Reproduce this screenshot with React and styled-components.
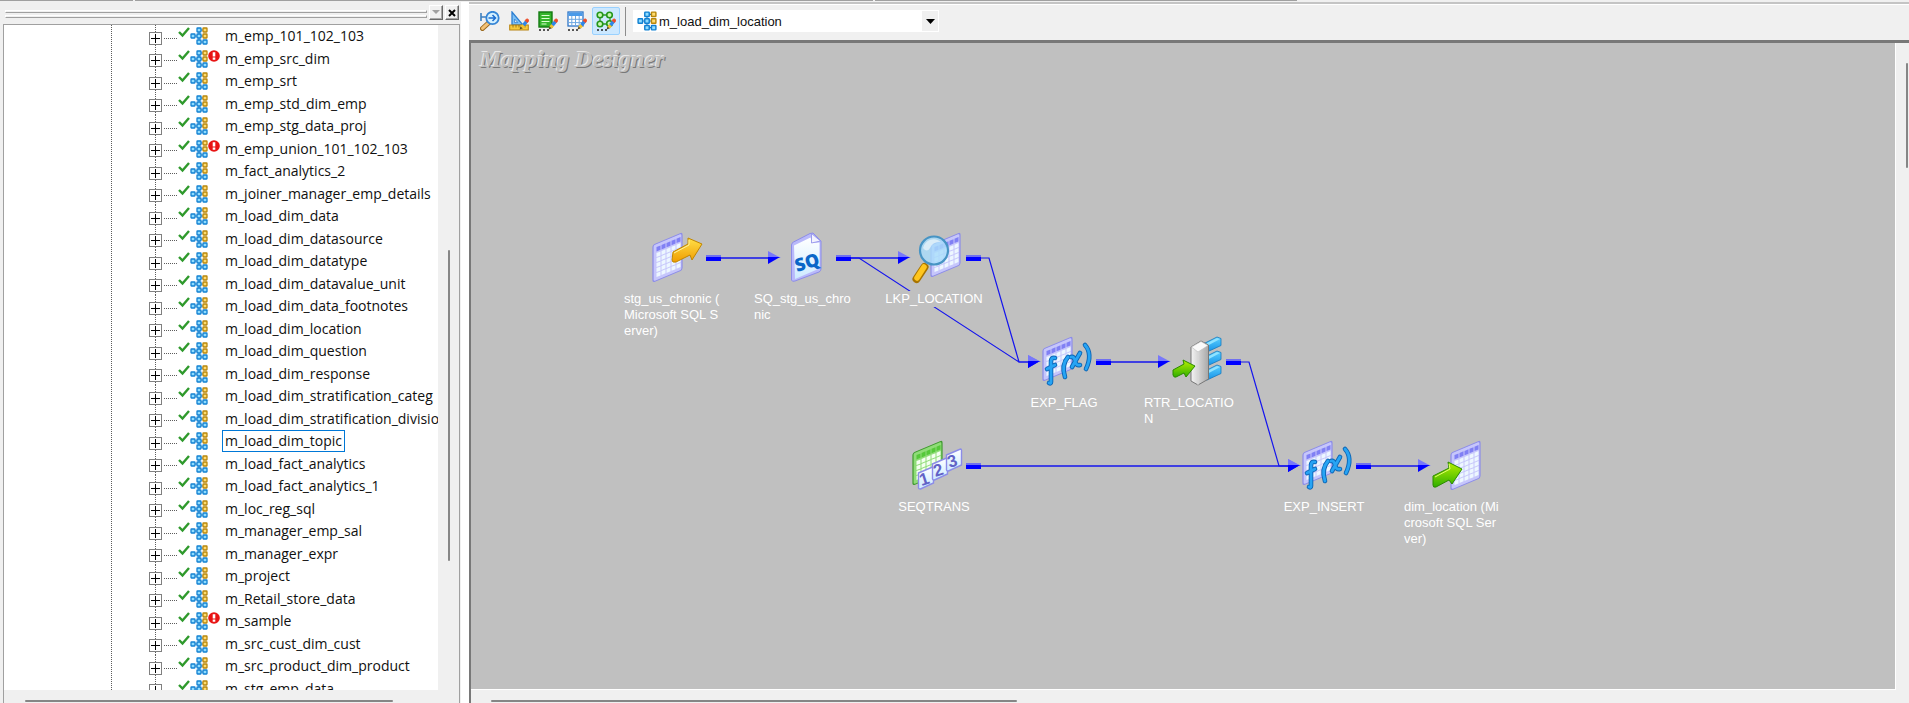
import React from 'react';
import styled, { createGlobalStyle, css } from 'styled-components';

const GlobalStyle = createGlobalStyle`
  *, *::before, *::after { box-sizing: border-box; }
  html, body { margin: 0; height: 100%; }
  #root { height: 100%; }
  body {
    background: #f0f0f0;
    color: #101010;
    font-family: "Open Sans", "Noto Sans", sans-serif;
    font-size: 14px;
    overflow: hidden;
  }
  button { font: inherit; padding: 0; }
`;

/* ---------- window frame ---------- */

const Window = styled.div`
  display: flex;
  flex-direction: column;
  height: 100vh;
  overflow: hidden;
`;

const FrameEdge = styled.div`
  display: flex;
  flex: none;
  gap: 2px;
  height: 2px;
`;

const EdgeLine = styled.div`
  flex: ${(p) => p.$share} 1 0;
  height: 1px;
  background: ${(p) => (p.$blank ? 'transparent' : '#a0a0a0')};
`;

const Workspace = styled.div`
  display: flex;
  flex: 1;
  min-height: 0;
`;

/* ---------- scroll bars ---------- */

const Track = styled.div`
  display: flex;
  background: #f0f0f0;
  &::before { content: ""; flex: ${(p) => p.$before} 1 0; }
  &::after { content: ""; flex: ${(p) => p.$after} 1 0; }
  ${(p) =>
    p.$vertical
      ? css`
          flex-direction: column;
          width: ${p.$depth}px;
          padding-left: ${p.$inset}px;
        `
      : css`
          height: 13px;
          padding-top: 10px;
        `}
`;

const Thumb = styled.div`
  flex: ${(p) => p.$size} 1 0;
  border-radius: 1px;
  background: #868686;
  ${(p) => (p.$vertical ? 'width: 2px;' : 'height: 2px;')}
`;

function ScrollBar({ vertical, parts, depth, inset }) {
  return (
    <Track $vertical={vertical} $before={parts[0]} $after={parts[2]} $depth={depth} $inset={inset} aria-hidden="true">
      <Thumb $vertical={vertical} $size={parts[1]} />
    </Track>
  );
}

/* ---------- repository navigator ---------- */

const Navigator = styled.aside`
  display: flex;
  flex: none;
  flex-direction: column;
  width: 461px;
  padding: 0 1px 0 3px;
`;

const NavHeader = styled.header`
  display: flex;
  flex: none;
  gap: 2px;
  height: 22px;
  padding: 3px 1px 0 2px;
`;

const Grip = styled.div`
  display: grid;
  flex: 1;
  align-content: start;
  gap: 2px;
  padding-top: 5px;
`;

const GripBar = styled.div`
  height: 3px;
  border: 1px solid #a0a0a0;
  border-top-color: #fff;
  border-left-color: #fff;
`;

const CaptionButton = styled.button`
  display: grid;
  place-items: center;
  width: 14px;
  height: 15px;
  border: 1px solid #fff;
  border-right-color: #696969;
  border-bottom-color: #696969;
  background: #f0f0f0;
  box-shadow: inset -1px -1px #a8a8a8;
`;

const TreeFrame = styled.div`
  display: grid;
  flex: 1;
  grid-template-columns: minmax(0, 1fr) auto;
  grid-template-rows: minmax(0, 1fr);
  min-height: 0;
  border: 1px solid #a0a0a0;
  border-width: 1px 1px 0;
`;

const NavBottom = styled.div`
  flex: none;
  border-left: 1px solid #a0a0a0;
  border-right: 1px solid #a0a0a0;
`;

const vDots = 'repeating-linear-gradient(#5c5c5c 0 1px, transparent 1px 2px)';
const hDots = 'repeating-linear-gradient(90deg, #5c5c5c 0 1px, transparent 1px 2px)';

const Tree = styled.ul`
  display: grid;
  grid-auto-rows: 22px 23px;
  align-content: start;
  margin: 0;
  padding: 0 0 0 145px;
  overflow: hidden;
  background: ${vDots} 107px 0 / 1px 100% no-repeat #fff;
  list-style: none;
`;

const TreeRow = styled.li`
  display: flex;
  align-items: center;
  min-width: 0;
`;

const ExpanderCell = styled.div`
  display: flex;
  align-items: center;
  align-self: stretch;
  width: 13px;
  padding-top: 4px;
  background: ${vDots} 6px 0 / 1px 100% no-repeat;
`;

const Expander = styled.button`
  display: grid;
  place-items: center;
  width: 13px;
  height: 13px;
  border: 1px solid #808080;
  background: #fff;
`;

const Stub = styled.div`
  flex: none;
  width: 14px;
  height: 1px;
  margin: 4px 0 0 2px;
  background: ${hDots};
`;

const Check = styled.svg`
  flex: none;
  width: 12px;
  height: 12px;
  margin-bottom: 8px;
`;

const Glyph = styled.svg`
  flex: none;
  width: ${(p) => p.$size}px;
  height: ${(p) => p.$size}px;
`;

const BadgeSlot = styled.div`
  display: flex;
  flex: none;
  width: 14px;
  height: 18px;
`;

const ItemLabel = styled.span`
  flex: none;
  padding: 0 2px;
  border: 1px solid ${(p) => (p.$selected ? '#0078d7' : 'transparent')};
  line-height: 20px;
  white-space: nowrap;
`;

/* ---------- designer ---------- */

const Designer = styled.main`
  display: flex;
  flex: 1;
  flex-direction: column;
  min-width: 0;
  border-left: 8px solid #fff;
`;

const Toolbar = styled.div`
  display: flex;
  flex: none;
  align-items: center;
  gap: 1px;
  height: 38px;
  padding: 0 7px 2px;
  border-top: 2px solid #c4c4c4;
  box-shadow: inset 0 1px #fff;
`;

const ToolButton = styled.button`
  display: grid;
  place-items: center;
  width: 28px;
  height: 28px;
  border: 1px solid ${(p) => (p.$active ? '#99d1ff' : 'transparent')};
  border-radius: 2px;
  background: ${(p) => (p.$active ? '#cce8ff' : 'transparent')};
`;

const Divider = styled.div`
  width: 1px;
  height: 29px;
  margin: 0 6px 0 4px;
  background: #8c8c8c;
`;

const Picker = styled.label`
  display: flex;
  align-items: center;
  width: 306px;
  height: 22px;
  padding: 0 1px 0 4px;
  background: #fff;
`;

const PickerSelect = styled.select`
  flex: 1;
  min-width: 0;
  height: 22px;
  padding: 0 2px;
  border: 0;
  appearance: none;
  background: transparent;
  color: #101010;
  font: 13px "Liberation Sans", sans-serif;
`;

const PickerArrow = styled.span`
  display: grid;
  place-items: center;
  width: 16px;
  height: 20px;
  background: #f0f0f0;
  pointer-events: none;
`;

const CanvasFrame = styled.div`
  display: grid;
  flex: 1;
  grid-template-columns: minmax(0, 1fr) auto;
  grid-template-rows: minmax(0, 1fr) auto;
  min-height: 0;
  border: solid #787878;
  border-width: 3px 0 0 2px;
`;

const Canvas = styled.section`
  position: relative;
  overflow: hidden;
  border: solid #fff;
  border-width: 0 1px 1px 0;
  background: #c0c0c0;
`;

const Title = styled.h1`
  margin: 0;
  padding: 2px 9px;
  color: #c0c0c0;
  font: italic bold 24px/28px "Liberation Serif", serif;
  text-shadow: -1px -1px #e8e8e8, 1px 1px #787878;
`;

const Links = styled.svg`
  position: absolute;
  inset: 0;
  width: 100%;
  height: 100%;
`;

const Node = styled.figure`
  position: absolute;
  left: ${(p) => p.$x}px;
  top: ${(p) => p.$y}px;
  display: flex;
  flex-direction: column;
  align-items: center;
  gap: 9px;
  width: 100px;
  margin: 0;
`;

const NodeIcon = styled.svg`
  width: 50px;
  height: 50px;
  margin-left: 6px;
  overflow: visible;
`;

const NodeLabel = styled.figcaption`
  align-self: ${(p) => (p.$wrapped ? 'flex-start' : 'center')};
  background: #c0c0c0;
  color: #fff;
  font: 13px/16px "Liberation Sans", sans-serif;
  white-space: pre;
`;

/* ---------- small icons ---------- */

function MappingIcon({ size = 18 }) {
  const blue = { fill: '#8fdcff', stroke: '#1180d2' };
  const gold = { fill: '#ffdc70', stroke: '#b8860b' };
  const cells = [
    [7, 1, blue], [13, 1, gold],
    [1, 7, blue], [7, 7, blue], [13, 7, gold],
    [7, 13, blue], [13, 13, blue],
  ];
  return (
    <Glyph $size={size} viewBox="0 0 18 18" aria-hidden="true">
      <path d="M3 9h12M9 3v12M9 3h6M9 15h6" stroke="#1b6fb5" strokeWidth="1" fill="none" />
      {cells.map(([x, y, c]) => (
        <rect key={`${x}-${y}`} x={x} y={y} width="4" height="4" rx="0.5" strokeWidth="1.3" {...c} />
      ))}
    </Glyph>
  );
}

const CheckIcon = () => (
  <Check viewBox="0 0 12 12" aria-hidden="true">
    <path d="M1 6l3.500 3.500L11 2" fill="none" stroke="#2f9a2c" strokeWidth="2.4" />
  </Check>
);

const ErrorBadge = () => (
  <svg width="12" height="12" viewBox="0 0 12 12" role="img" aria-label="Invalid">
    <circle cx="6" cy="6" r="5.8" fill="#e81414" />
    <path d="M6 2.2v4.200M6 7.600v2.200" stroke="#fff" strokeWidth="2.6" />
  </svg>
);

const Pencil = () => (
  <g>
    <path d="M10.600 18.400l1-3.400 2.400 2.200z" fill="#5a4a20" />
    <path d="M11.400 15.400l2-2.400 2.600 2.200-2 2.400z" fill="#f2c230" />
    <path d="M13.200 13l3-3.600 2.600 2.200-3 3.600z" fill="#2f86e8" />
    <path d="M16 9.600l1.200-1.400q1.400-.8 2.400.6.6 1-.2 1.600l-.8 1.200z" fill="#ee4a26" stroke="#ee4a26" strokeWidth=".8" />
  </g>
);

const Dots = () => <path d="M1 19h2M5 19h2M9 19h2" stroke="#222" strokeWidth="1.3" />;

const toolIcons = {
  'Source Analyzer': (
    <>
      <path d="M1 2v8M1 6h6" stroke="#3b7fc0" strokeWidth="1.6" />
      <path d="M2.5 17.5l6-5.5" stroke="#9c6a1e" strokeWidth="5" strokeLinecap="round" />
      <path d="M2.5 17.3l6-5.5" stroke="#f3c277" strokeWidth="3" strokeLinecap="round" />
      <circle cx="12.5" cy="7" r="6.2" fill="#d3f0ff" stroke="#3585d6" strokeWidth="1.8" />
      <path d="M8.5 7h7M12.5 4l3 3-3 3" fill="none" stroke="#1c6cd0" strokeWidth="1.5" />
    </>
  ),
  'Target Designer': (
    <>
      <path d="M3 1v13h11z" fill="#7cc0f5" stroke="#2d7fd2" strokeWidth="1.3" />
      <path d="M5.6 8v3.6h3.2z" fill="#f0f0f0" stroke="#2d7fd2" strokeWidth=".8" />
      <rect x=".7" y="14" width="18.6" height="5" fill="#f7ca3c" stroke="#b88412" />
      <path d="M4 14v2.5M7 14v2.5M10 14v2.5M13 14v2.5M16 14v2.5" stroke="#8a6410" strokeWidth=".8" />
      <Pencil />
    </>
  ),
  'Transformation Developer': (
    <>
      <rect x="1" y="1" width="13" height="15" fill="#35b52c" stroke="#137a12" strokeWidth="1.4" />
      <path d="M3.5 4.5h8M3.5 7.5h8M3.5 10.5h8M3.5 13h5" stroke="#dcffd2" strokeWidth="1.1" />
      <Dots />
      <Pencil />
    </>
  ),
  'Mapplet Designer': (
    <>
      <rect x="1" y="1" width="15" height="14" fill="#fff" stroke="#2f76c8" strokeWidth="1.3" />
      <rect x="1.5" y="1.5" width="14" height="3.5" fill="#4a9ae8" />
      <path d="M1 8.3h15M1 11.6h15M4.8 5v10M8.5 5v10M12.2 5v10" stroke="#6ea8e2" />
      <Dots />
      <Pencil />
    </>
  ),
  'Mapping Designer': (
    <>
      <path d="M4 4h10v9H4z" fill="none" stroke="#2b9a1e" strokeWidth="1.3" />
      {[[4, 4], [13.5, 4], [4, 13], [13.5, 12.5]].map(([x, y]) => (
        <circle key={`${x}${y}`} cx={x} cy={y} r="2.8" fill="#c9f7b4" stroke="#24951a" strokeWidth="1.6" />
      ))}
      <Dots />
      <Pencil />
    </>
  ),
};

/* ---------- transformation icons, each on a 50 x 50 field ---------- */

function Sheet({ x = 0, height = 32, green }) {
  const c = green
    ? { back: '#8fdc78', edge: '#3f9a2e', head: '#55c83a', cell: '#f4fff0' }
    : { back: '#c6c6fb', edge: '#8c8ce8', head: '#8080f4', cell: '#edf7ff' };
  const rows = Math.floor((height - 11) / 5);
  return (
    <g transform={`matrix(1 -0.42 0 1 ${x} 13)`}>
      <rect x="1" y="0.5" width="29" height={height} rx="2" fill={c.back} stroke={c.edge} strokeWidth="1.2" />
      {[0, 1, 2, 3, 4].map((i) => (
        <g key={i}>
          <rect x={4.5 + i * 5} y="4" width="4" height="4.4" fill={c.head} />
          {Array.from({ length: rows }, (_, r) => (
            <rect key={r} x={4.5 + i * 5} y={10 + r * 5} width="4" height="4" fill={c.cell} />
          ))}
        </g>
      ))}
    </g>
  );
}

const Shades = () => (
  <svg width="0" height="0" aria-hidden="true">
    <defs>
      <linearGradient id="gold" x1="0" y1="0" x2="0" y2="1">
        <stop offset="0" stopColor="#ffe14a" /><stop offset="1" stopColor="#f09c00" />
      </linearGradient>
      <linearGradient id="lime" x1="0" y1="0" x2="0" y2="1">
        <stop offset="0" stopColor="#b8f000" /><stop offset="1" stopColor="#2fae00" />
      </linearGradient>
      <linearGradient id="azure" x1="0" y1="0" x2="0" y2="1">
        <stop offset="0" stopColor="#5cd0ff" /><stop offset="1" stopColor="#1492e8" />
      </linearGradient>
      <linearGradient id="steel" x1="0" y1="0" x2="1" y2="0">
        <stop offset="0" stopColor="#f4f4f4" /><stop offset="1" stopColor="#a8a8a8" />
      </linearGradient>
      <linearGradient id="paper" x1="0" y1="0" x2="0" y2="1">
        <stop offset="0" stopColor="#ffffff" /><stop offset="1" stopColor="#cdeaff" />
      </linearGradient>
    </defs>
  </svg>
);

const artwork = {
  source: (
    <>
      <Sheet height={37} />
      <path d="M21 20l15-8V6l14 6-10 16-2-5-14 7q-4 1-4-2z" fill="url(#gold)" stroke="#c08600" strokeWidth="1" strokeLinejoin="round" />
      <path d="M22 21l15-8V8" fill="none" stroke="#fff3a0" strokeWidth="1" />
    </>
  ),
  qualifier: (
    <>
      <path d="M9.5 13q0-2 2-3L28 1.5l3-.5 8 8v28q0 2-2 3L13 49q-3 1-3.5-1z" fill="#b9b9fa" stroke="#8c8ce8" strokeWidth="1" />
      <path d="M12 13.5L28.5 5.5l2 5.5 7-.5V36.5L13 47z" fill="url(#paper)" />
      <path d="M29.5 1.5v9.5l9-2z" fill="#f2f2ff" stroke="#8c8ce8" strokeWidth=".8" />
      <text x="15" y="40" transform="rotate(-17 15 40)" fontFamily='"Open Sans", sans-serif' fontWeight="800" fontSize="18" fill="#0a66c8">SQ</text>
    </>
  ),
  lookup: (
    <>
      <Sheet x={18} height={32} />
      <path d="M12.5 35L4.5 47" stroke="#a87400" strokeWidth="8" strokeLinecap="round" />
      <path d="M12 35L5 46" stroke="#ffc61e" strokeWidth="5.5" strokeLinecap="round" />
      <circle cx="22" cy="18.5" r="14" fill="#a8dcfa" fillOpacity=".82" stroke="#4794c4" strokeWidth="2.2" />
      <path d="M11 16a11 11 0 0 1 18-6q-8-1-11 6-3 5-7 0z" fill="#fff" fillOpacity=".55" />
    </>
  ),
  expression: (
    <>
      <Sheet height={32} />
      {[['#0b64b4', 4.6], ['#27a4f4', 2.8]].map(([color, width]) => (
        <g key={color} fill="none" stroke={color} strokeWidth={width} strokeLinecap="round" strokeLinejoin="round">
          <path d="M13 22q-4-1-4 4v20q0 2-2 1M5 33l8-4" />
          <path d="M26 21q-7 8-3 20" />
          <path d="M29 21q3-1 4 4t5 4M38 17l-8 14" />
          <path d="M43 9q8 9 1 24" />
        </g>
      ))}
    </>
  ),
  router: (
    <>
      {[0, 14, 28].map((y) => (
        <g key={y} transform={`translate(0 ${y})`}>
          <path d="M31 8L45 1l4 1.500v7L35 16l-4-1z" fill="url(#azure)" stroke="#1678bc" strokeWidth=".8" />
          <path d="M32 8.500L45 2l3 1-13 7z" fill="#8fe2ff" />
        </g>
      ))}
      <path d="M19 11l10-6 7.500 4v34L26 49l-7-4z" fill="url(#steel)" stroke="#777" strokeWidth="1" />
      <path d="M19.500 11l9.500-5.500 7 4L26 16z" fill="#fafafa" stroke="#bbb" strokeWidth=".6" />
      <path d="M26 16v33" stroke="#d8d8d8" />
      <path d="M1 34l11-6-1-4 12 6-9 11-2-4-8 4q-2 1-3-2z" fill="url(#lime)" stroke="#2b8a00" strokeWidth="1" strokeLinejoin="round" />
    </>
  ),
  sequence: (
    <>
      <Sheet height={32} green />
      {[[6.5, 33, '1'], [20.5, 24, '2'], [34.5, 15, '3']].map(([x, y, n]) => (
        <g key={n}>
          <path d={`M${x} ${y}l14-6q1 0 1 1v15l-13 6q-2 0-2-1z`} fill="url(#paper)" stroke="#8c8ce8" strokeWidth="1.4" />
          <text x={x + 3} y={y + 13} transform={`rotate(-18 ${x + 3} ${y + 13})`} fontFamily='"Liberation Sans", sans-serif' fontWeight="700" fontSize="17" fill="#6262c6">{n}</text>
        </g>
      ))}
    </>
  ),
  target: (
    <>
      <Sheet x={18} height={37} />
      <path d="M1 36l16-8-1-6 14 7-10 15-3-4-13 7q-3 1-3-2z" fill="url(#lime)" stroke="#2b8a00" strokeWidth="1" strokeLinejoin="round" />
      <path d="M3 37l15-8-1-5" fill="none" stroke="#e2ff70" strokeWidth="1" />
    </>
  ),
};

/* ---------- data ---------- */

const mappings = [
  'm_emp_101_102_103', 'm_emp_src_dim', 'm_emp_srt', 'm_emp_std_dim_emp', 'm_emp_stg_data_proj',
  'm_emp_union_101_102_103', 'm_fact_analytics_2', 'm_joiner_manager_emp_details', 'm_load_dim_data',
  'm_load_dim_datasource', 'm_load_dim_datatype', 'm_load_dim_datavalue_unit', 'm_load_dim_data_footnotes',
  'm_load_dim_location', 'm_load_dim_question', 'm_load_dim_response', 'm_load_dim_stratification_categ',
  'm_load_dim_stratification_divisio', 'm_load_dim_topic', 'm_load_fact_analytics', 'm_load_fact_analytics_1',
  'm_loc_reg_sql', 'm_manager_emp_sal', 'm_manager_expr', 'm_project', 'm_Retail_store_data', 'm_sample',
  'm_src_cust_dim_cust', 'm_src_product_dim_product', 'm_stg_emp_data',
];
const invalid = new Set(['m_emp_src_dim', 'm_emp_union_101_102_103', 'm_sample']);
const selected = 'm_load_dim_topic';

/* Nodes sit on a 130 x 104 placement grid. */
const place = (col, row) => ({ x: 153 + col * 130, y: 189 + row * 104 });

const nodes = {
  source: { at: place(0, 0), art: 'source', label: 'stg_us_chronic (\nMicrosoft SQL S\nerver)' },
  sq: { at: place(1, 0), art: 'qualifier', label: 'SQ_stg_us_chro\nnic' },
  lkp: { at: place(2, 0), art: 'lookup', label: 'LKP_LOCATION' },
  flag: { at: place(3, 1), art: 'expression', label: 'EXP_FLAG' },
  rtr: { at: place(4, 1), art: 'router', label: 'RTR_LOCATIO\nN' },
  seq: { at: place(2, 2), art: 'sequence', label: 'SEQTRANS' },
  insert: { at: place(5, 2), art: 'expression', label: 'EXP_INSERT' },
  target: { at: place(6, 2), art: 'target', label: 'dim_location (Mi\ncrosoft SQL Ser\nver)' },
};

const links = [
  ['source', 'sq'], ['sq', 'lkp'], ['sq', 'flag'], ['lkp', 'flag'],
  ['flag', 'rtr'], ['rtr', 'insert'], ['seq', 'insert'], ['insert', 'target'],
];

function Link({ from, to }) {
  const a = nodes[from].at;
  const b = nodes[to].at;
  const y1 = a.y + 26;
  const y2 = b.y + 26;
  const tip = b.x + 27;
  const straight = y1 === y2;
  const route = straight
    ? `M${a.x + 82} ${y1}H${tip - 12}`
    : `M${a.x + 82} ${y1}H${a.x + 105}L${b.x + 5} ${y2}H${tip - 12}`;
  return (
    <g>
      <path d={route} fill="none" stroke="#1414ee" strokeWidth={straight ? 1.6 : 1.2} />
      <rect x={a.x + 82} y={y1 - 3} width="15" height="6" fill="#7070f0" />
      <rect x={a.x + 82} y={y1 - 1} width="15" height="4" fill="#0000ff" />
      <path d={`M${tip - 13} ${y2 - 7}l13 7h-13z`} fill="#7878fa" />
      <path d={`M${tip - 13} ${y2 - 1}h12l-12 7z`} fill="#0000ff" />
    </g>
  );
}

export default function App() {
  return (
    <Window>
      <GlobalStyle />
      <Shades />
      <FrameEdge>
        <EdgeLine $share={133} />
        <EdgeLine $share={738} />
        <EdgeLine $share={422} />
        <EdgeLine $share={610} $blank />
      </FrameEdge>
      <Workspace>
        <Navigator>
          <NavHeader>
            <Grip>
              <GripBar />
              <GripBar />
            </Grip>
            <CaptionButton aria-label="Panel menu">
              <svg width="8" height="5" viewBox="0 0 8 5"><path d="M0 0h8L4 4z" fill="#a0a0a0" /></svg>
            </CaptionButton>
            <CaptionButton aria-label="Close panel">
              <svg width="8" height="8" viewBox="0 0 8 8"><path d="M1 1l6 6M7 1L1 7" stroke="#000" strokeWidth="2" /></svg>
            </CaptionButton>
          </NavHeader>
          <TreeFrame>
            <Tree>
              {mappings.map((name) => (
                <TreeRow key={name}>
                  <ExpanderCell>
                    <Expander aria-label={`Expand ${name}`}>
                      <svg width="9" height="9" viewBox="0 0 9 9"><path d="M0 4h9v1H0zM4 0h1v9H4z" fill="#000" /></svg>
                    </Expander>
                  </ExpanderCell>
                  <Stub />
                  <CheckIcon />
                  <MappingIcon />
                  <BadgeSlot>{invalid.has(name) && <ErrorBadge />}</BadgeSlot>
                  <ItemLabel $selected={name === selected}>{name}</ItemLabel>
                </TreeRow>
              ))}
            </Tree>
            <ScrollBar vertical parts={[225, 311, 129]} depth={21} inset={10} />
          </TreeFrame>
          <NavBottom>
            <ScrollBar parts={[21, 368, 66]} />
          </NavBottom>
        </Navigator>
        <Designer>
          <Toolbar role="toolbar">
            {Object.entries(toolIcons).map(([name, icon]) => (
              <ToolButton key={name} $active={name === 'Mapping Designer'} aria-label={name}>
                <Glyph $size={20} viewBox="0 0 20 20">{icon}</Glyph>
              </ToolButton>
            ))}
            <Divider />
            <Picker>
              <MappingIcon size={20} />
              <PickerSelect aria-label="Mapping" defaultValue="m_load_dim_location">
                <option>m_load_dim_location</option>
              </PickerSelect>
              <PickerArrow>
                <svg width="9" height="5" viewBox="0 0 9 5"><path d="M0 0h9L4.5 5z" fill="#000" /></svg>
              </PickerArrow>
            </Picker>
          </Toolbar>
          <CanvasFrame>
            <Canvas>
              <Title>Mapping Designer</Title>
              <Links aria-hidden="true">
                {links.map(([from, to]) => <Link key={from + to} from={from} to={to} />)}
              </Links>
              {Object.entries(nodes).map(([id, { at, art, label }]) => (
                <Node key={id} $x={at.x} $y={at.y}>
                  <NodeIcon viewBox="0 0 50 50" aria-hidden="true">{artwork[art]}</NodeIcon>
                  <NodeLabel $wrapped={label.includes('\n')}>{label}</NodeLabel>
                </Node>
              ))}
            </Canvas>
            <ScrollBar vertical parts={[20, 105, 521]} depth={13} inset={10} />
            <ScrollBar parts={[20, 525, 878]} />
          </CanvasFrame>
        </Designer>
      </Workspace>
    </Window>
  );
}
